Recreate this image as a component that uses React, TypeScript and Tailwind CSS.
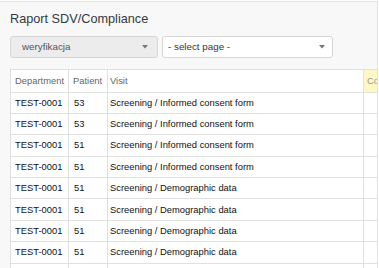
import React from "react";

const rows = [
  ["TEST-0001", "53", "Screening / Informed consent form"],
  ["TEST-0001", "53", "Screening / Informed consent form"],
  ["TEST-0001", "51", "Screening / Informed consent form"],
  ["TEST-0001", "51", "Screening / Informed consent form"],
  ["TEST-0001", "51", "Screening / Demographic data"],
  ["TEST-0001", "51", "Screening / Demographic data"],
  ["TEST-0001", "51", "Screening / Demographic data"],
  ["TEST-0001", "51", "Screening / Demographic data"],
  ["", "", ""],
];

function Caret() {
  return (
    <svg width="6" height="4" viewBox="0 0 6 4" className="shrink-0">
      <path d="M0 0 H6 L3 3.5 Z" fill="#777" />
    </svg>
  );
}

export default function App() {
  return (
    <div
      className="w-[379px] h-[268px] overflow-hidden bg-white"
      style={{ fontFamily: '"Liberation Sans", Arial, sans-serif' }}
    >
      <div className="mt-[1px] h-[267px] w-[378px] border-t border-r border-[#e3e3e3] bg-[#f8f8f8] overflow-hidden">
        <div className="pl-[10px] pt-[10px] text-[12.7px] leading-[15px] text-[#333a42]">
          Raport SDV/Compliance
        </div>
        <div className="mt-[9px] flex gap-[4px] pl-[10px]">
          <div className="flex h-[22px] w-[148px] items-center justify-between rounded-[3px] border border-[#d5d5d5] bg-[#ececec] pl-[11px] pr-[9px] text-[9.8px] text-[#555]">
            <span>weryfikacja</span>
            <Caret />
          </div>
          <div className="flex h-[22px] w-[171px] items-center justify-between rounded-[3px] border border-[#d5d5d5] bg-white pl-[5px] pr-[7px] text-[9.8px] text-[#333]">
            <span>- select page -</span>
            <Caret />
          </div>
        </div>
        <div className="mt-[11px] pl-[10px] overflow-hidden">
          <table className="table-fixed w-[433px] border-collapse bg-white text-[9.4px] leading-[12px]">
            <colgroup>
              <col className="w-[58px]" />
              <col className="w-[39px]" />
              <col className="w-[256px]" />
              <col className="w-[80px]" />
            </colgroup>
            <thead>
              <tr className="h-[22.5px]">
                <th className="border border-[#e0e0e0] px-[4px] text-left font-normal text-[#666]">
                  Department
                </th>
                <th className="border border-[#e0e0e0] px-[4px] text-left font-normal text-[#666]">
                  Patient
                </th>
                <th className="border border-[#e0e0e0] px-[2px] text-left font-normal text-[#666]">
                  Visit
                </th>
                <th className="border border-[#e0e0e0] bg-[#fff7c4] px-[3px] text-left font-normal text-[#999] whitespace-nowrap overflow-hidden">
                  Compliance
                </th>
              </tr>
            </thead>
            <tbody>
              {rows.map((r, i) => (
                <tr key={i} className="h-[21.4px]">
                  <td className="border border-[#e0e0e0] px-[4px] text-[#111] whitespace-nowrap">
                    {r[0]}
                  </td>
                  <td className="border border-[#e0e0e0] px-[5px] text-[#111]">
                    {r[1]}
                  </td>
                  <td className="border border-[#e0e0e0] px-[2px] text-[#111] whitespace-nowrap">
                    {r[2]}
                  </td>
                  <td className="border border-[#e0e0e0] px-[3px]"></td>
                </tr>
              ))}
            </tbody>
          </table>
        </div>
      </div>
    </div>
  );
}
